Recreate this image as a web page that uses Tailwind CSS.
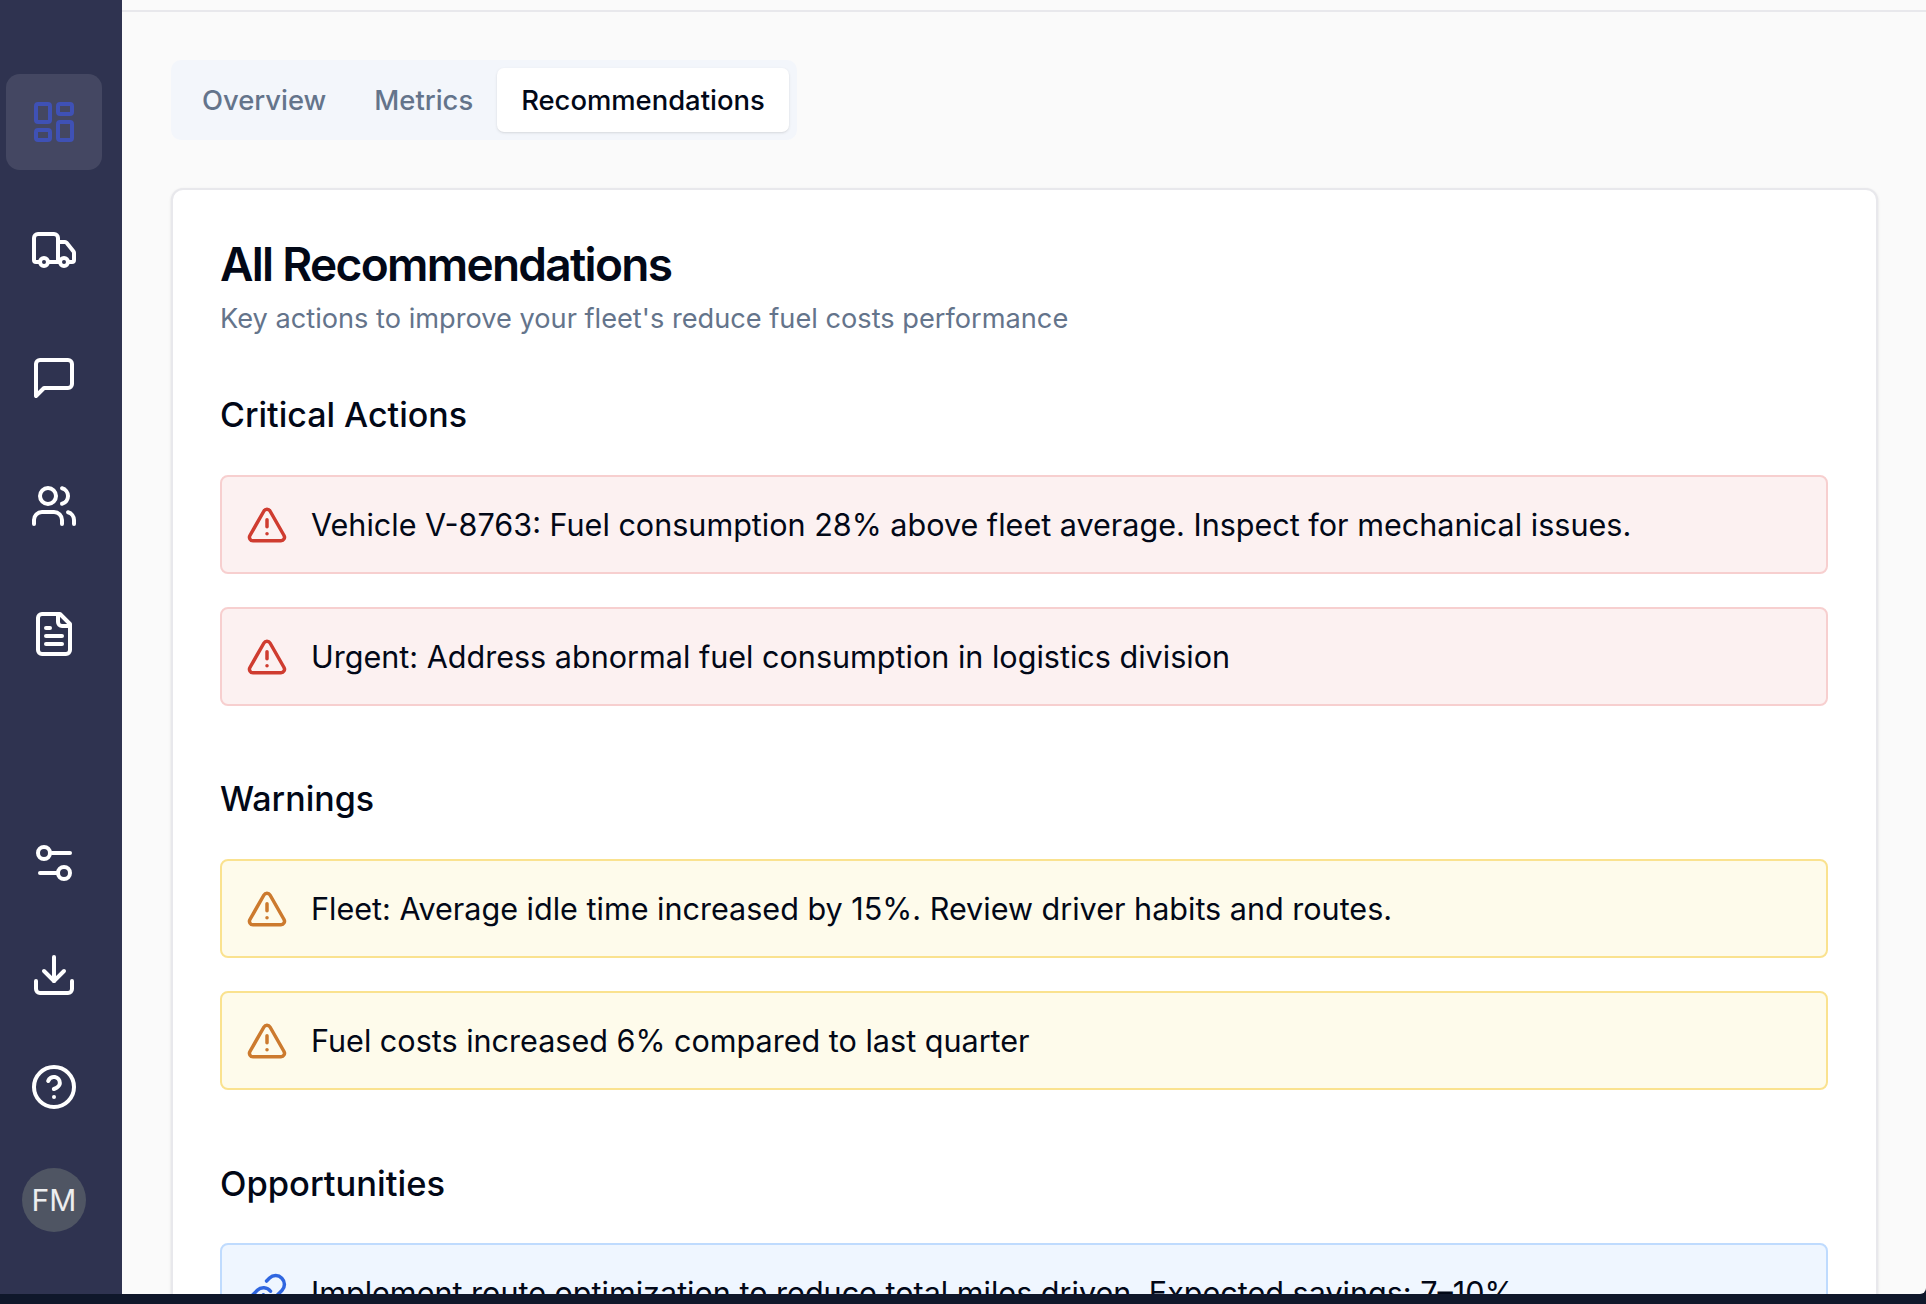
<!DOCTYPE html>
<html lang="en">
<head>
  <meta charset="UTF-8" />
  <title>Fleet – Recommendations</title>
  <script src="https://cdn.jsdelivr.net/npm/@tailwindcss/browser@4"></script>
</head>
<body class="bg-[#0f172a] h-screen overflow-hidden font-['Inter',sans-serif]">
  <div class="flex h-[1294px] overflow-hidden rounded-br-[6px] bg-[#fafafa]">

    <!-- Sidebar -->
    <aside class="w-[122px] shrink-0 bg-[#2f3350] flex flex-col items-center pr-[16px] pl-[2px] pt-[74px] pb-[62px] text-white">
      <nav class="flex flex-col gap-[32px]">
        <a class="w-[96px] h-[96px] rounded-[14px] bg-white/10 flex items-center justify-center text-[#3f51b5]">
          <svg class="w-[48px] h-[48px]" viewBox="0 0 24 24" fill="none" stroke="currentColor" stroke-width="2" stroke-linecap="round" stroke-linejoin="round"><rect x="3" y="3" width="7" height="9" rx="1"/><rect x="14" y="3" width="7" height="5" rx="1"/><rect x="14" y="12" width="7" height="9" rx="1"/><rect x="3" y="16" width="7" height="5" rx="1"/></svg>
        </a>
        <a class="w-[96px] h-[96px] flex items-center justify-center">
          <svg class="w-[48px] h-[48px]" viewBox="0 0 24 24" fill="none" stroke="currentColor" stroke-width="2" stroke-linecap="round" stroke-linejoin="round"><path d="M14 18V6a2 2 0 0 0-2-2H4a2 2 0 0 0-2 2v11a1 1 0 0 0 1 1h2"/><path d="M15 18H9"/><path d="M19 18h2a1 1 0 0 0 1-1v-3.65a1 1 0 0 0-.22-.624l-3.48-4.35A1 1 0 0 0 17.52 8H14"/><circle cx="17" cy="18" r="2"/><circle cx="7" cy="18" r="2"/></svg>
        </a>
        <a class="w-[96px] h-[96px] flex items-center justify-center">
          <svg class="w-[48px] h-[48px]" viewBox="0 0 24 24" fill="none" stroke="currentColor" stroke-width="2" stroke-linecap="round" stroke-linejoin="round"><path d="M21 15a2 2 0 0 1-2 2H7l-4 4V5a2 2 0 0 1 2-2h14a2 2 0 0 1 2 2z"/></svg>
        </a>
        <a class="w-[96px] h-[96px] flex items-center justify-center">
          <svg class="w-[48px] h-[48px]" viewBox="0 0 24 24" fill="none" stroke="currentColor" stroke-width="2" stroke-linecap="round" stroke-linejoin="round"><path d="M16 21v-2a4 4 0 0 0-4-4H6a4 4 0 0 0-4 4v2"/><circle cx="9" cy="7" r="4"/><path d="M22 21v-2a4 4 0 0 0-3-3.87"/><path d="M16 3.13a4 4 0 0 1 0 7.75"/></svg>
        </a>
        <a class="w-[96px] h-[96px] flex items-center justify-center">
          <svg class="w-[48px] h-[48px]" viewBox="0 0 24 24" fill="none" stroke="currentColor" stroke-width="2" stroke-linecap="round" stroke-linejoin="round"><path d="M15 2H6a2 2 0 0 0-2 2v16a2 2 0 0 0 2 2h12a2 2 0 0 0 2-2V7Z"/><path d="M14 2v4a2 2 0 0 0 2 2h4"/><path d="M10 9H8"/><path d="M16 13H8"/><path d="M16 17H8"/></svg>
        </a>
      </nav>

      <div class="mt-auto flex flex-col items-center gap-[64px]">
        <svg class="w-[48px] h-[48px]" viewBox="0 0 24 24" fill="none" stroke="currentColor" stroke-width="2" stroke-linecap="round" stroke-linejoin="round"><path d="M20 7h-9"/><path d="M14 17H5"/><circle cx="17" cy="17" r="3"/><circle cx="7" cy="7" r="3"/></svg>
        <svg class="w-[48px] h-[48px]" viewBox="0 0 24 24" fill="none" stroke="currentColor" stroke-width="2" stroke-linecap="round" stroke-linejoin="round"><path d="M21 15v4a2 2 0 0 1-2 2H5a2 2 0 0 1-2-2v-4"/><polyline points="7 10 12 15 17 10"/><line x1="12" y1="15" x2="12" y2="3"/></svg>
        <svg class="w-[48px] h-[48px]" viewBox="0 0 24 24" fill="none" stroke="currentColor" stroke-width="2" stroke-linecap="round" stroke-linejoin="round"><circle cx="12" cy="12" r="10"/><path d="M9.09 9a3 3 0 0 1 5.83 1c0 2-3 3-3 3"/><path d="M12 17h.01"/></svg>
      </div>
      <div class="mt-[57px] w-[64px] h-[64px] rounded-full bg-[#4f5563] flex items-center justify-center text-[30px] text-white/90">FM</div>
    </aside>

    <!-- Main -->
    <main class="flex-1 min-w-0 flex flex-col">
      <div class="h-[12px] shrink-0 border-b-2 border-[#e8e8ec]"></div>

      <div class="pt-[48px] pl-[49px] pr-[48px]">
        <!-- Tabs -->
        <div class="inline-flex h-[80px] items-center rounded-[10px] bg-[#f3f6fb] py-[8px] pl-[7px] pr-[8px] text-[27.4px] font-medium text-[#64748b]">
          <span class="pt-[1px] px-[24px]">Overview</span>
          <span class="pt-[1px] px-[24px]">Metrics</span>
          <span class="h-[64px] pt-[1px] px-[24px] flex items-center rounded-[7px] bg-white text-[#020817] shadow-sm">Recommendations</span>
        </div>

        <!-- Card -->
        <section class="mt-[48px] rounded-[12px] border-2 border-[#e8e8ec] bg-white pl-[47px] pr-[48px] pt-[46px] shadow-sm">
          <h1 class="text-[46px] leading-[56px] font-semibold tracking-[-1.7px] text-[#020817]">All Recommendations</h1>
          <p class="mt-[7px] text-[27.2px] leading-[40px] text-[#64748b]">Key actions to improve your fleet's reduce fuel costs performance</p>

          <h2 class="mt-[48px] text-[34px] leading-[56px] font-medium text-[#020817]">Critical Actions</h2>
          <div class="mt-[32px] flex flex-col gap-[33px]">
            <div class="h-[99px] flex items-center gap-[23px] rounded-[8px] border-2 border-[#f7cfcf] bg-[#fcf1f1] pl-[24px] text-[#020817] text-[30.55px]">
              <svg class="w-[42px] h-[42px] text-[#cf3c30]" viewBox="0 0 24 24" fill="none" stroke="currentColor" stroke-width="2" stroke-linecap="round" stroke-linejoin="round"><path d="m21.73 18-8-14a2 2 0 0 0-3.48 0l-8 14A2 2 0 0 0 4 21h16a2 2 0 0 0 1.73-3"/><path d="M12 9v4"/><path d="M12 17h.01"/></svg>
              <span>Vehicle V-8763: Fuel consumption 28% above fleet average. Inspect for mechanical issues.</span>
            </div>
            <div class="h-[99px] flex items-center gap-[23px] rounded-[8px] border-2 border-[#f7cfcf] bg-[#fcf1f1] pl-[24px] text-[#020817] text-[30.55px]">
              <svg class="w-[42px] h-[42px] text-[#cf3c30]" viewBox="0 0 24 24" fill="none" stroke="currentColor" stroke-width="2" stroke-linecap="round" stroke-linejoin="round"><path d="m21.73 18-8-14a2 2 0 0 0-3.48 0l-8 14A2 2 0 0 0 4 21h16a2 2 0 0 0 1.73-3"/><path d="M12 9v4"/><path d="M12 17h.01"/></svg>
              <span>Urgent: Address abnormal fuel consumption in logistics division</span>
            </div>
          </div>

          <h2 class="mt-[65px] text-[34px] leading-[56px] font-medium text-[#020817]">Warnings</h2>
          <div class="mt-[32px] flex flex-col gap-[33px]">
            <div class="h-[99px] flex items-center gap-[23px] rounded-[8px] border-2 border-[#fae28f] bg-[#fefbeb] pl-[24px] text-[#020817] text-[30.55px]">
              <svg class="w-[42px] h-[42px] text-[#cc7a2e]" viewBox="0 0 24 24" fill="none" stroke="currentColor" stroke-width="2" stroke-linecap="round" stroke-linejoin="round"><path d="m21.73 18-8-14a2 2 0 0 0-3.48 0l-8 14A2 2 0 0 0 4 21h16a2 2 0 0 0 1.73-3"/><path d="M12 9v4"/><path d="M12 17h.01"/></svg>
              <span>Fleet: Average idle time increased by 15%. Review driver habits and routes.</span>
            </div>
            <div class="h-[99px] flex items-center gap-[23px] rounded-[8px] border-2 border-[#fae28f] bg-[#fefbeb] pl-[24px] text-[#020817] text-[30.55px]">
              <svg class="w-[42px] h-[42px] text-[#cc7a2e]" viewBox="0 0 24 24" fill="none" stroke="currentColor" stroke-width="2" stroke-linecap="round" stroke-linejoin="round"><path d="m21.73 18-8-14a2 2 0 0 0-3.48 0l-8 14A2 2 0 0 0 4 21h16a2 2 0 0 0 1.73-3"/><path d="M12 9v4"/><path d="M12 17h.01"/></svg>
              <span>Fuel costs increased 6% compared to last quarter</span>
            </div>
          </div>

          <h2 class="mt-[66px] text-[34.5px] leading-[56px] font-medium text-[#020817]">Opportunities</h2>
          <div class="mt-[31px] flex flex-col gap-[33px]">
            <div class="h-[99px] flex items-center gap-[23px] rounded-[8px] border-2 border-[#bfdbfe] bg-[#eff6ff] pl-[24px] text-[#020817] text-[30.55px]">
              <svg class="w-[42px] h-[42px] text-[#2f66e0]" viewBox="0 0 24 24" fill="none" stroke="currentColor" stroke-width="2" stroke-linecap="round" stroke-linejoin="round"><path d="M10 13a5 5 0 0 0 7.54.54l3-3a5 5 0 0 0-7.07-7.07l-1.72 1.71"/><path d="M14 11a5 5 0 0 0-7.54-.54l-3 3a5 5 0 0 0 7.07 7.07l1.71-1.71"/></svg>
              <span>Implement route optimization to reduce total miles driven. Expected savings: 7–10%</span>
            </div>
          </div>
        </section>
      </div>
    </main>
  </div>
</body>
</html>
